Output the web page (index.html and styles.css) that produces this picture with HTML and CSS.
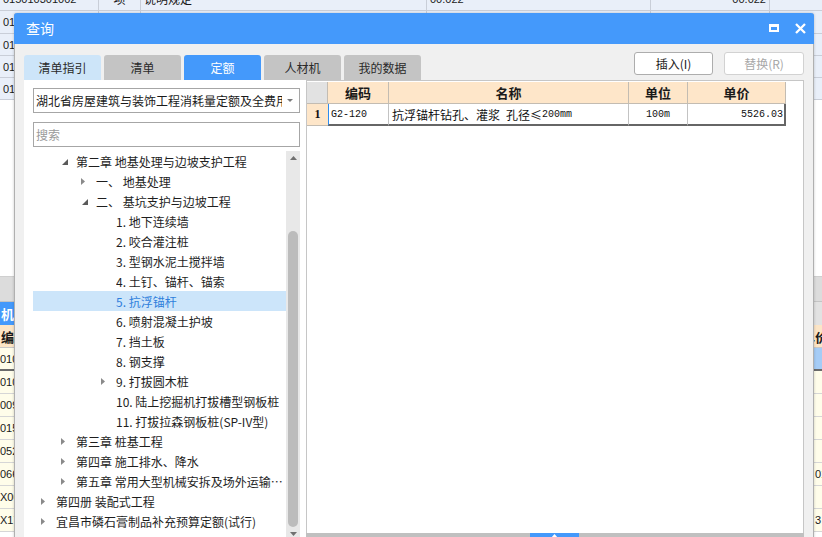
FILE: index.html
```html
<!DOCTYPE html>
<html lang="zh-CN">
<head>
<meta charset="utf-8">
<title>查询</title>
<link rel="stylesheet" href="styles.css">
</head>
<body>
<div class="app">
  <div class="gtop">
    <div class="grow g0">
      <div class="c c1">015010301002</div>
      <div class="c c2">项</div>
      <div class="c c3">说明规定</div>
      <div class="c c4">00.022</div>
      <div class="c c5 r">00.022</div>
      <div class="c c6"></div>
    </div>
    <div class="grow g1"><div class="c c1">0105</div><div class="c c2"></div><div class="c c3"></div><div class="c c4"></div><div class="c c5"></div><div class="c c6"></div></div>
    <div class="grow"><div class="c c1">0105</div><div class="c c2"></div><div class="c c3"></div><div class="c c4"></div><div class="c c5"></div><div class="c c6"></div></div>
    <div class="grow"><div class="c c1">0105</div><div class="c c2"></div><div class="c c3"></div><div class="c c4"></div><div class="c c5"></div><div class="c c6"></div></div>
    <div class="grow"><div class="c c1">0105</div><div class="c c2"></div><div class="c c3"></div><div class="c c4"></div><div class="c c5"></div><div class="c c6"></div></div>
  </div>
  <div class="gmid"></div>
  <div class="gbot">
    <div class="band"></div>
    <div class="strip"><div class="btab">机械</div></div>
    <div class="bhead"><div class="bh1">编码</div><div class="bfill"></div><div class="bh2">单价</div></div>
    <div class="brow sel"><div class="b1">010301</div><div class="bfill"></div><div class="b2"></div></div>
    <div class="brow"><div class="b1">010302</div><div class="bfill"></div><div class="b2"></div></div>
    <div class="brow"><div class="b1">009001</div><div class="bfill"></div><div class="b2"></div></div>
    <div class="brow"><div class="b1">015001</div><div class="bfill"></div><div class="b2"></div></div>
    <div class="brow"><div class="b1">052001</div><div class="bfill"></div><div class="b2"></div></div>
    <div class="brow"><div class="b1">066001</div><div class="bfill"></div><div class="b2">01</div></div>
    <div class="brow"><div class="b1">X00001</div><div class="bfill"></div><div class="b2"></div></div>
    <div class="brow"><div class="b1">X17001</div><div class="bfill"></div><div class="b2">3</div></div>
  </div>
</div>

<div class="dialog">
  <div class="titlebar">
    <span class="title">查询</span>
    <span class="tb-icons">
      <svg class="ic-max" width="10" height="8" viewBox="0 0 10 8"><path d="M0 0H10V8H0Z M2 3V6H8V3Z" fill="#fff" fill-rule="evenodd"/></svg>
      <svg class="ic-close" width="11" height="11" viewBox="0 0 11 11"><path d="M1 1L10 10M10 1L1 10" stroke="#fff" stroke-width="2.3" fill="none"/></svg>
    </span>
  </div>
  <div class="dbody">
    <div class="toolbar">
      <div class="tabs">
        <div class="tab tab-guide">清单指引</div>
        <div class="tab">清单</div>
        <div class="tab tab-active">定额</div>
        <div class="tab">人材机</div>
        <div class="tab">我的数据</div>
      </div>
      <div class="actions">
        <div class="btn">插入(I)</div>
        <div class="btn btn-off">替换(R)</div>
      </div>
    </div>
    <div class="main">
      <div class="left">
        <div class="select">
          <span class="sel-text">湖北省房屋建筑与装饰工程消耗量定额及全费用基价表</span>
          <svg class="sel-arrow" width="6" height="4" viewBox="0 0 6 4"><path d="M0 0H6L3 3Z" fill="#7a7a7a"/></svg>
        </div>
        <div class="search">搜索</div>
        <div class="tree-wrap">
          <div class="tree">
            <div class="node l1"><span class="tw"><svg class="ex" width="6" height="6" viewBox="0 0 6 6"><path d="M6 0V6H0Z" fill="#5a5a5a"/></svg></span><span class="lb">第二章 地基处理与边坡支护工程</span></div>
            <div class="node l2"><span class="tw"><svg class="co" width="4" height="7" viewBox="0 0 4 7"><path d="M0 0L4 3.5L0 7Z" fill="#8a8a8a"/></svg></span><span class="lb">一、 地基处理</span></div>
            <div class="node l2"><span class="tw"><svg class="ex" width="6" height="6" viewBox="0 0 6 6"><path d="M6 0V6H0Z" fill="#5a5a5a"/></svg></span><span class="lb">二、 基坑支护与边坡工程</span></div>
            <div class="node l3"><span class="tw"></span><span class="lb">1. 地下连续墙</span></div>
            <div class="node l3"><span class="tw"></span><span class="lb">2. 咬合灌注桩</span></div>
            <div class="node l3"><span class="tw"></span><span class="lb">3. 型钢水泥土搅拌墙</span></div>
            <div class="node l3"><span class="tw"></span><span class="lb">4. 土钉、锚杆、锚索</span></div>
            <div class="node l3 node-sel"><span class="tw"></span><span class="lb">5. 抗浮锚杆</span></div>
            <div class="node l3"><span class="tw"></span><span class="lb">6. 喷射混凝土护坡</span></div>
            <div class="node l3"><span class="tw"></span><span class="lb">7. 挡土板</span></div>
            <div class="node l3"><span class="tw"></span><span class="lb">8. 钢支撑</span></div>
            <div class="node l3"><span class="tw"><svg class="co" width="4" height="7" viewBox="0 0 4 7"><path d="M0 0L4 3.5L0 7Z" fill="#8a8a8a"/></svg></span><span class="lb">9. 打拔圆木桩</span></div>
            <div class="node l3"><span class="tw"></span><span class="lb">10. 陆上挖掘机打拔槽型钢板桩</span></div>
            <div class="node l3"><span class="tw"></span><span class="lb">11. 打拔拉森钢板桩(SP-IV型)</span></div>
            <div class="node l1"><span class="tw"><svg class="co" width="4" height="7" viewBox="0 0 4 7"><path d="M0 0L4 3.5L0 7Z" fill="#8a8a8a"/></svg></span><span class="lb">第三章 桩基工程</span></div>
            <div class="node l1"><span class="tw"><svg class="co" width="4" height="7" viewBox="0 0 4 7"><path d="M0 0L4 3.5L0 7Z" fill="#8a8a8a"/></svg></span><span class="lb">第四章 施工排水、降水</span></div>
            <div class="node l1"><span class="tw"><svg class="co" width="4" height="7" viewBox="0 0 4 7"><path d="M0 0L4 3.5L0 7Z" fill="#8a8a8a"/></svg></span><span class="lb">第五章 常用大型机械安拆及场外运输费用</span></div>
            <div class="node l0"><span class="tw"><svg class="co" width="4" height="7" viewBox="0 0 4 7"><path d="M0 0L4 3.5L0 7Z" fill="#8a8a8a"/></svg></span><span class="lb">第四册 装配式工程</span></div>
            <div class="node l0"><span class="tw"><svg class="co" width="4" height="7" viewBox="0 0 4 7"><path d="M0 0L4 3.5L0 7Z" fill="#8a8a8a"/></svg></span><span class="lb">宜昌市磷石膏制品补充预算定额(试行)</span></div>
          </div>
          <div class="vscroll">
            <div class="sb-up"><svg width="7" height="4" viewBox="0 0 7 4"><path d="M0 4L3.5 0L7 4Z" fill="#707070"/></svg></div>
            <div class="sb-space"></div>
            <div class="sb-thumb"></div>
            <div class="sb-down"><svg width="7" height="4" viewBox="0 0 7 4"><path d="M0 0H7L3.5 4Z" fill="#707070"/></svg></div>
          </div>
        </div>
      </div>
      <div class="right">
        <div class="table">
          <div class="tr thead">
            <div class="th rn"></div>
            <div class="th w-code">编码</div>
            <div class="th w-name">名称</div>
            <div class="th w-unit">单位</div>
            <div class="th w-price">单价</div>
          </div>
          <div class="tr trow">
            <div class="td rn">1</div>
            <div class="td w-code cur"><span class="m">G2-120</span></div>
            <div class="td w-name">抗浮锚杆钻孔、灌浆<span class="m"> </span>孔径≤<span class="m">200mm</span></div>
            <div class="td w-unit ctr"><span class="m">100m</span></div>
            <div class="td w-price rt"><span class="m">5526.03</span></div>
          </div>
        </div>
        <div class="hbar">
          <div class="hb-left"></div>
          <div class="hb-handle"><svg width="7" height="4" viewBox="0 0 7 4"><path d="M0 4L3.5 0L7 4Z" fill="#fff"/></svg></div>
          <div class="hb-right"></div>
        </div>
      </div>
    </div>
  </div>
</div>
</body>
</html>
```

FILE: styles.css
```css
* { box-sizing: border-box; }

html, body {
  margin: 0;
  padding: 0;
}

body {
  width: 822px;
  height: 537px;
  overflow: hidden;
  position: relative;
  background: #ffffff;
  font-family: "Noto Sans CJK SC", "Noto Sans", sans-serif;
  font-size: 12px;
  color: #1a1a1a;
}

/* ---------- background application ---------- */
.app {
  width: 822px;
  display: flex;
  flex-direction: column;
}

.gtop {
  display: flex;
  flex-direction: column;
  background: #e9eff9;
}

.grow {
  display: flex;
  height: 22px;
  border-bottom: 1px solid #c9ced8;
  font-family: "Liberation Sans", sans-serif;
  font-size: 11px;
}

.grow.g0 {
  margin-top: -13px;
  height: 24px;
}

.grow.g1 {
  height: 23px;
}

.c {
  display: flex;
  align-items: center;
  padding: 0 3px;
  border-right: 1px solid #c9ced8;
  white-space: nowrap;
  overflow: hidden;
}

.c1 { width: 99px; }
.c2 { width: 42px; font-family: "Noto Sans CJK SC", sans-serif; font-size: 12px; justify-content: center; }
.c3 { width: 286px; font-family: "Noto Sans CJK SC", sans-serif; font-size: 12px; }
.c4 { width: 224px; }
.c5 { width: 119px; }
.c5.r { justify-content: flex-end; }
.c6 { flex: 1; border-right: none; }

.gmid {
  height: 176px;
  background: #ffffff;
}

.gbot {
  display: flex;
  flex-direction: column;
}

.band {
  height: 26px;
  background: #dcdcdc;
  border-top: 1px solid #cfcfcf;
  border-bottom: 1px solid #c4c4c4;
}

.strip {
  height: 23px;
  background: #e2e2e2;
  display: flex;
}

.btab {
  width: 60px;
  background: #4499fb;
  color: #ffffff;
  font-weight: bold;
  font-size: 13px;
  display: flex;
  align-items: center;
  padding-left: 1px;
}

.bhead {
  height: 23px;
  display: flex;
  background: #fce5c6;
  border-bottom: 1px solid #c8c8c8;
  font-weight: bold;
  font-size: 13px;
  overflow: hidden;
}

.bh1 {
  width: 80px;
  display: flex;
  align-items: center;
  padding-left: 1px;
}

.bfill { flex: 1; }

.bh2 {
  width: 40px;
  flex: none;
  display: flex;
  align-items: center;
  white-space: nowrap;
  margin-right: -20px;
}

.brow {
  height: 23px;
  display: flex;
  background: #fffdea;
  border-bottom: 1px solid #d6d6d6;
  font-family: "Liberation Sans", sans-serif;
  font-size: 11px;
}

.brow.sel {
  border-bottom: 2px solid #6a6a6a;
}

.brow.sel .b2 {
  background: #a5ccf6;
}

.b1 {
  width: 80px;
  display: flex;
  align-items: center;
}

.b2 {
  width: 10px;
  display: flex;
  align-items: center;
  padding-left: 2px;
  border-left: 1px solid #d6d6d6;
  white-space: nowrap;
  overflow: hidden;
}

/* ---------- dialog ---------- */
.dialog {
  position: absolute;
  left: 14px;
  top: 13px;
  width: 800px;
  display: flex;
  flex-direction: column;
  background: #f0f0f0;
  border: 1px solid #b0b0b0;
  border-top: none;
  border-radius: 3px 3px 0 0;
  box-shadow: 0 0 3px rgba(0, 0, 0, 0.2);
}

.titlebar {
  height: 31px;
  background: #4499fb;
  display: flex;
  align-items: center;
  justify-content: space-between;
  padding: 0 8px 0 12px;
  border-radius: 3px 3px 0 0;
  margin: 0 -1px;
}

.title {
  color: #ffffff;
  font-size: 14px;
  margin-top: -1px;
}

.tb-icons {
  display: flex;
  align-items: center;
  gap: 16px;
}

.ic-max { margin-top: -1px; }

.dbody {
  display: flex;
  flex-direction: column;
}

.toolbar {
  height: 36px;
  display: flex;
  justify-content: space-between;
  align-items: flex-start;
  padding: 0 9px 0 9px;
}

.tabs {
  display: flex;
  gap: 3px;
  margin-top: 11px;
}

.tab {
  width: 77px;
  height: 25px;
  display: flex;
  align-items: center;
  justify-content: center;
  background: #c4c4c4;
  color: #2a2a2a;
  font-size: 12px;
  border-radius: 3px 3px 0 0;
}

.tab-guide {
  background: #cde5f9;
}

.tab-active {
  background: #4499fb;
  color: #ffffff;
}

.actions {
  display: flex;
  gap: 11px;
  margin-top: 8px;
}

.btn {
  width: 79px;
  height: 23px;
  display: flex;
  align-items: center;
  justify-content: center;
  background: #ffffff;
  border: 1px solid #adadad;
  border-radius: 3px;
  font-size: 12px;
  color: #1a1a1a;
}

.btn-off {
  width: 80px;
  border-color: #d2d2d2;
  color: #a8a8a8;
}

.main {
  height: 461px;
  display: flex;
  padding: 0 9px;
}

/* ---------- left panel ---------- */
.left {
  width: 282px;
  background: #ffffff;
  display: flex;
  flex-direction: column;
  padding: 8px 6px 0 9px;
}

.select {
  height: 25px;
  border: 1px solid #a6a6a6;
  display: flex;
  align-items: center;
  padding: 0 6px 0 2px;
  gap: 5px;
}

.sel-text {
  flex: 1;
  white-space: nowrap;
  overflow: hidden;
  font-size: 12px;
  color: #1a1a1a;
}

.sel-arrow { flex: none; }

.search {
  height: 25px;
  margin-top: 9px;
  border: 1px solid #a6a6a6;
  display: flex;
  align-items: center;
  padding-left: 2px;
  font-size: 12px;
  color: #9a9a9a;
}

.tree-wrap {
  margin-top: 4px;
  height: 390px;
  display: flex;
}

.tree {
  width: 253px;
  display: flex;
  flex-direction: column;
}

.node {
  height: 20px;
  display: flex;
  align-items: center;
  white-space: nowrap;
  padding-right: 3px;
}

.node.l0 { padding-left: 7px; }
.node.l1 { padding-left: 27px; }
.node.l2 { padding-left: 47px; }
.node.l3 { padding-left: 67px; }

.tw {
  width: 16px;
  flex: none;
  display: flex;
  align-items: center;
}

.tw .co { margin-left: 1px; }
.tw .ex { margin-left: 2px; margin-top: 1px; }

.lb {
  overflow: hidden;
  text-overflow: ellipsis;
  white-space: nowrap;
  font-size: 12px;
  color: #1e1e1e;
}

.node-sel {
  background: #cce5fa;
}

.node-sel .lb {
  color: #2f7fdc;
}

.vscroll {
  width: 14px;
  background: #e8e8e8;
  display: flex;
  flex-direction: column;
  align-items: center;
}

.sb-up {
  height: 14px;
  display: flex;
  align-items: center;
  justify-content: center;
}

.sb-space { height: 66px; }

.sb-thumb {
  width: 10px;
  height: 296px;
  background: #bcbcbc;
  border-radius: 5px;
}

.sb-down {
  height: 14px;
  display: flex;
  align-items: center;
  justify-content: center;
}

/* ---------- right panel ---------- */
.right {
  width: 498px;
  background: #ffffff;
  border: 1px solid #c6c6c6;
  border-bottom: none;
  display: flex;
  flex-direction: column;
}

.table {
  flex: 1;
  padding-top: 1px;
}

.tr {
  display: flex;
  height: 22px;
}

.th {
  height: 22px;
  display: flex;
  align-items: center;
  justify-content: center;
  background: #fee6c9;
  border-right: 1px solid #c3bcb2;
  border-bottom: 1px solid #c3bcb2;
  font-size: 13px;
  font-weight: bold;
  color: #1a1a1a;
}

.th.rn {
  background: #e2e2e2;
}

.rn { width: 21px; }
.w-code { width: 61px; }
.w-name { width: 240px; }
.w-unit { width: 59px; }
.w-price { width: 98px; }

.td {
  height: 22px;
  display: flex;
  align-items: center;
  white-space: nowrap;
  overflow: hidden;
  padding: 0 3px;
  font-size: 12px;
  color: #111111;
  border-right: 1px solid #c3c3c3;
  border-bottom: 2px solid #666666;
}

.td.rn {
  justify-content: center;
  background: #fee6c9;
  font-family: "Liberation Serif", serif;
  font-weight: bold;
  font-size: 12px;
  border-right: none;
  border-bottom: 1px solid #c3bcb2;
  padding: 0;
}

.td.cur {
  border-left: 1px solid #2e8df0;
  padding-left: 2px;
}

.td.ctr { justify-content: center; }

.td.rt {
  justify-content: flex-end;
  border-right: 2px solid #666666;
  padding-right: 1px;
}

.m {
  font-family: "Liberation Mono", monospace;
  font-size: 10px;
  white-space: pre;
}

.hbar {
  height: 8px;
  display: flex;
  background: #c0c0c0;
  margin: 0 -1px;
}

.hb-left { width: 224px; }

.hb-handle {
  width: 49px;
  background: #4499fb;
  display: flex;
  justify-content: center;
  align-items: flex-start;
  padding-top: 1px;
}

.hb-right { flex: 1; }
```
